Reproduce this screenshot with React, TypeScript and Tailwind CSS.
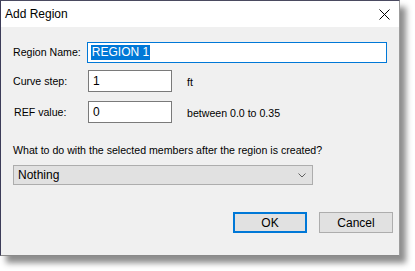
export default function App() {
  return (
    <div className="relative h-[271px] w-[415px] bg-white font-['Liberation_Sans',Arial,sans-serif] text-black">
      <div className="flex h-[256px] w-[400px] flex-col border-l border-t border-l-[#3c3c58] border-t-[#4a4a60] border-r border-b border-r-[#9c9c9c] border-b-[#8a8a8a] shadow-[6px_7px_6px_rgba(0,0,0,0.45)]">
        {/* title bar */}
        <div className="flex h-[26px] items-center justify-between bg-white pl-[4px] pr-[9px]">
          <span className="text-[12px] leading-none">Add Region</span>
          <svg width="11" height="11" viewBox="0 0 11 11" className="mt-[1px]">
            <path d="M0.5 0.5 L10.5 10.5 M10.5 0.5 L0.5 10.5" stroke="#000" strokeWidth="1" />
          </svg>
        </div>

        {/* body */}
        <div className="flex flex-1 flex-col bg-[#f0f0f0] px-[12px] pt-[15px] text-[10.6px]">
          <div className="flex h-[21px] items-center">
            <span className="w-[75px] pt-[1px]">Region Name:</span>
            <div className="flex h-[21px] w-[305px] items-center border border-[#0078d7] bg-white pl-[3px]">
              <span className="bg-[#0078d7] px-[1px] py-[1px] text-[12px] leading-[13px] text-white">REGION 1</span>
            </div>
          </div>

          <div className="mt-[7px] flex h-[22px] items-center">
            <span className="w-[75px] pt-[1px]">Curve step:</span>
            <div className="flex h-[22px] w-[84px] items-center border border-[#7a7a7a] bg-white pl-[4px] text-[12px]">1</div>
            <span className="ml-[15px] pt-[4px]">ft</span>
          </div>

          <div className="mt-[9px] flex h-[22px] items-center">
            <span className="w-[75px] pl-[1px] pt-[1px]">REF value:</span>
            <div className="flex h-[22px] w-[84px] items-center border border-[#7a7a7a] bg-white pl-[4px] text-[12px]">0</div>
            <span className="ml-[15px] pt-[4px]">between 0.0 to 0.35</span>
          </div>

          <div className="mt-[21px] leading-[13px]">What to do with the selected members after the region is created?</div>

          <div className="mt-[8px] flex h-[20px] w-[300px] items-center justify-between border border-[#adadad] bg-[#e1e1e1] pl-[4px] pr-[6px] text-[12px]">
            <span>Nothing</span>
            <svg width="8" height="5" viewBox="0 0 8 5">
              <path d="M0.5 0.5 L4 4 L7.5 0.5" fill="none" stroke="#606060" strokeWidth="1" />
            </svg>
          </div>

          <div className="mt-[27px] flex justify-end gap-[12px]">
            <button className="flex h-[21px] w-[74px] items-center justify-center border-2 border-[#0078d7] bg-[#e1e1e1] text-[12px]">OK</button>
            <button className="mr-[-6px] flex h-[21px] w-[74px] items-center justify-center border border-[#adadad] bg-[#e1e1e1] text-[12px]">Cancel</button>
          </div>
        </div>
      </div>
    </div>
  );
}
